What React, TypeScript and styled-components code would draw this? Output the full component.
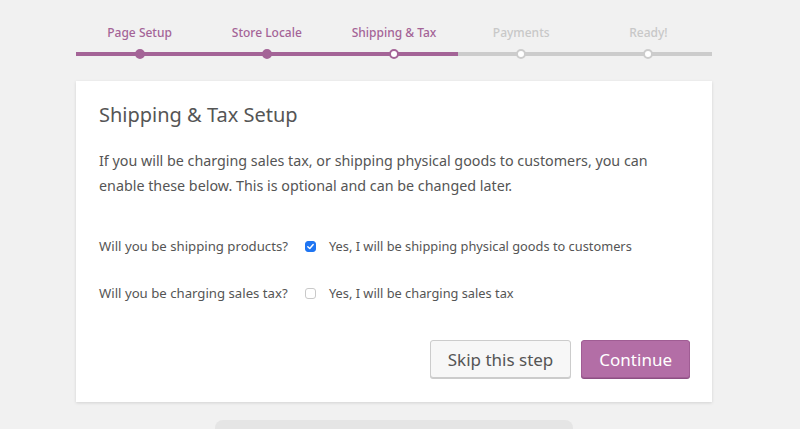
import styled, { createGlobalStyle } from "styled-components";

const GlobalStyle = createGlobalStyle`
  html, body {
    margin: 0;
    padding: 0;
    background: #f1f1f1;
    font-family: "Noto Sans", "Open Sans", sans-serif;
    color: #444;
  }
`;

const Page = styled.div`
  width: 800px;
  height: 429px;
  box-sizing: border-box;
  padding-right: 12px;
  overflow: hidden;
  display: flex;
  flex-direction: column;
  align-items: center;
`;

const Steps = styled.ol`
  list-style: none;
  margin: 0;
  padding: 24px 0 0;
  width: 636px;
  display: flex;
`;

type StepState = "done" | "active" | "todo";

const Step = styled.li<{ $state: StepState }>`
  flex: 1;
  display: flex;
  flex-direction: column;
  align-items: center;
  font-size: 12px;
  font-weight: 500;
  color: ${({ $state }) => ($state === "todo" ? "#c8c8c8" : "#a46497")};
  position: relative;

  &::after {
    content: "";
    display: block;
    width: 100%;
    height: 4px;
    margin-top: 11px;
    background: ${({ $state }) => ($state === "todo" ? "#cccccc" : "#a46497")};
  }
`;

const Dot = styled.span<{ $state: StepState }>`
  position: absolute;
  left: 50%;
  bottom: -3px;
  transform: translateX(-50%);
  width: 6px;
  height: 6px;
  border-radius: 50%;
  border: 2px solid ${({ $state }) => ($state === "todo" ? "#cccccc" : "#a46497")};
  background: ${({ $state }) => ($state === "done" ? "#a46497" : "#fff")};
  z-index: 1;
`;

const Card = styled.div`
  margin-top: 25px;
  width: 636px;
  box-sizing: border-box;
  background: #fff;
  box-shadow: 0 1px 3px rgba(0, 0, 0, 0.13);
  padding: 20px 22px 24px 23px;
`;

const Title = styled.h1`
  margin: 0;
  font-size: 20px;
  font-weight: 400;
  color: #555;
`;

const Intro = styled.p`
  margin: 20px 0 0;
  max-width: 565px;
  font-size: 14.3px;
  line-height: 25px;
  color: #555;
`;

const Form = styled.div`
  margin-top: 40px;
  display: grid;
  grid-template-columns: 206px 1fr;
  row-gap: 30px;
  color: #555;
`;

const Question = styled.span`
  font-size: 13.2px;
  line-height: 17px;
`;

const Answer = styled.label`
  display: flex;
  align-items: center;
  gap: 13px;
  font-size: 12.8px;
  line-height: 17px;
`;

const Check = styled.span<{ $on: boolean }>`
  width: 11px;
  height: 11px;
  border-radius: 3px;
  box-sizing: border-box;
  display: flex;
  align-items: center;
  justify-content: center;
  background: ${({ $on }) => ($on ? "#1f75f2" : "#fff")};
  border: 1px solid ${({ $on }) => ($on ? "#1f75f2" : "#c9c9c9")};
`;

const Actions = styled.div`
  margin-top: 38px;
  display: flex;
  justify-content: flex-end;
  gap: 10px;
`;

const Button = styled.button<{ $primary?: boolean }>`
  height: 38px;
  padding: 0 17px;
  border-radius: 3px;
  font-family: "Noto Sans", "Open Sans", sans-serif;
  font-size: 17px;
  cursor: pointer;
  color: ${({ $primary }) => ($primary ? "#fff" : "#555")};
  background: ${({ $primary }) => ($primary ? "#b36ea6" : "#f7f7f7")};
  border: 1px solid ${({ $primary }) => ($primary ? "#a05d94" : "#cccccc")};
  box-shadow: 0 1px 0 ${({ $primary }) => ($primary ? "#8d4f83" : "#cccccc")};
`;

const Footer = styled.div`
  margin-top: 18px;
  width: 358px;
  height: 20px;
  border-radius: 8px 8px 0 0;
  background: #e5e5e5;
`;

const steps: { label: string; state: StepState }[] = [
  { label: "Page Setup", state: "done" },
  { label: "Store Locale", state: "done" },
  { label: "Shipping & Tax", state: "active" },
  { label: "Payments", state: "todo" },
  { label: "Ready!", state: "todo" },
];

function Tick() {
  return (
    <svg width="9" height="9" viewBox="0 0 10 10">
      <path d="M2 5.2 L4.2 7.3 L8 2.8" fill="none" stroke="#fff" strokeWidth="1.6" strokeLinecap="round" strokeLinejoin="round" />
    </svg>
  );
}

export default function App() {
  return (
    <Page>
      <GlobalStyle />
      <Steps>
        {steps.map((s) => (
          <Step key={s.label} $state={s.state}>
            {s.label}
            <Dot $state={s.state} />
          </Step>
        ))}
      </Steps>
      <Card>
        <Title>Shipping &amp; Tax Setup</Title>
        <Intro>
          If you will be charging sales tax, or shipping physical goods to customers, you can
          enable these below. This is optional and can be changed later.
        </Intro>
        <Form>
          <Question>Will you be shipping products?</Question>
          <Answer>
            <Check $on>
              <Tick />
            </Check>
            Yes, I will be shipping physical goods to customers
          </Answer>
          <Question>Will you be charging sales tax?</Question>
          <Answer>
            <Check $on={false} />
            Yes, I will be charging sales tax
          </Answer>
        </Form>
        <Actions>
          <Button>Skip this step</Button>
          <Button $primary>Continue</Button>
        </Actions>
      </Card>
      <Footer />
    </Page>
  );
}
